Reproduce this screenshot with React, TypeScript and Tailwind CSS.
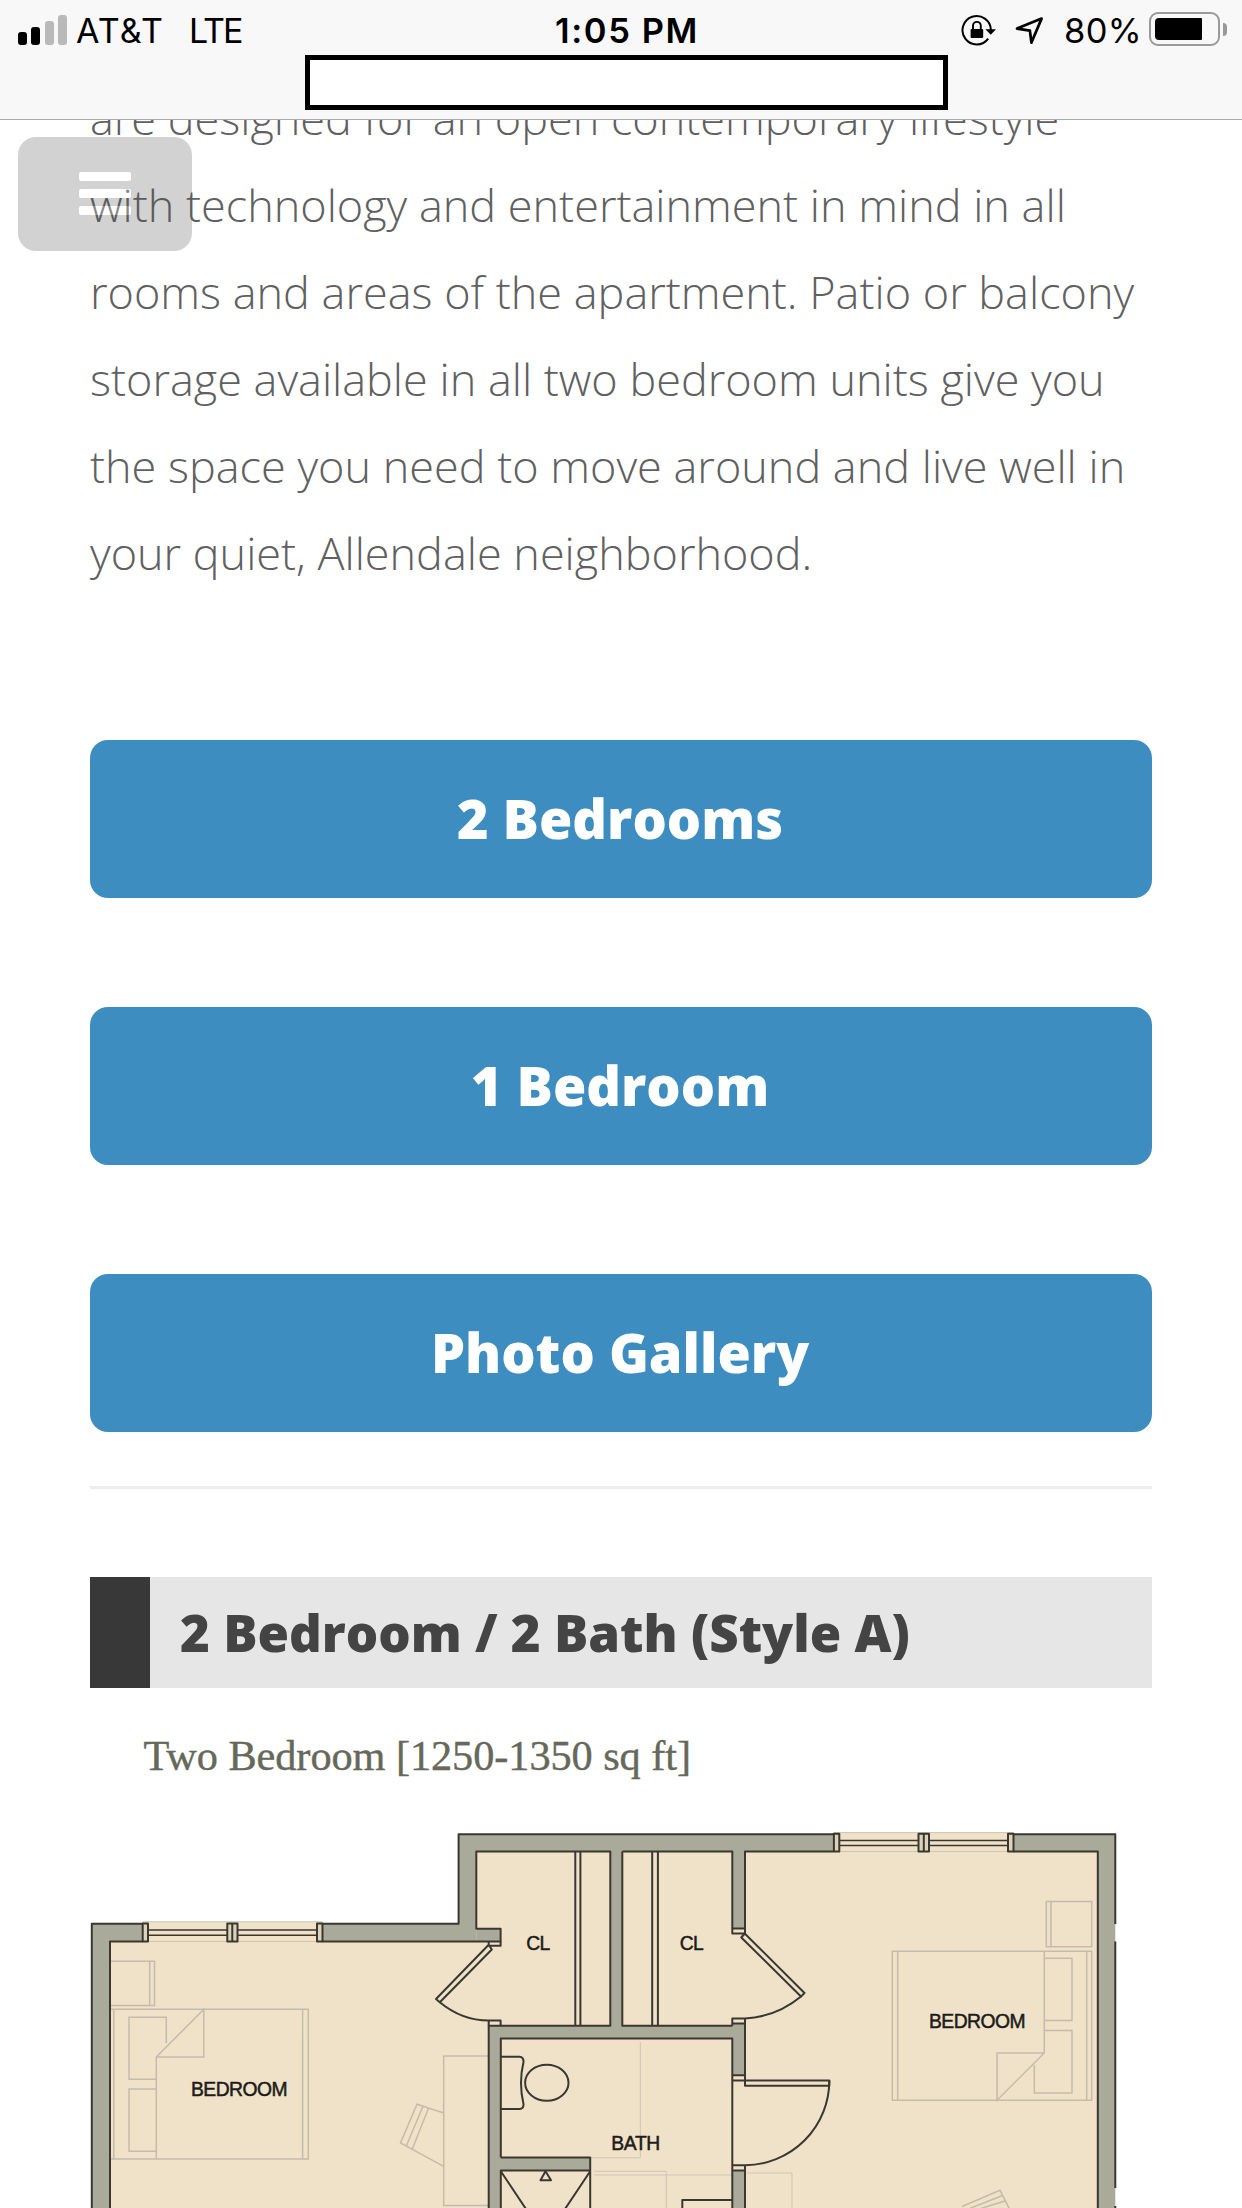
import type { ReactNode } from "react";

const OPEN_SANS = "font-['Open_Sans','Noto_Sans',sans-serif]";
const INTER = "font-['Inter','Liberation_Sans',sans-serif]";

function SignalBars() {
  return (
    <div className="flex h-[30px] w-[49px] items-end justify-between">
      <span className="h-[13px] w-[9px] rounded-[3px] bg-black" />
      <span className="h-[18px] w-[9px] rounded-[3px] bg-black" />
      <span className="h-[24px] w-[9px] rounded-[3px] bg-[#b9b9b9]" />
      <span className="h-[30px] w-[9px] rounded-[3px] bg-[#b9b9b9]" />
    </div>
  );
}

function RotationLockIcon() {
  return (
    <svg width="36" height="34" viewBox="961 13 36 34" fill="none">
      <path d="M988.2 38.6A14.2 14.2 0 1 1 990.9 30" stroke="#000" strokeWidth="2" />
      <path d="M985.4 29.2h10.6l-5.3 5.6z" fill="#000" />
      <rect x="970.6" y="29" width="12.6" height="9" rx="1" fill="#000" />
      <path d="M973 29.5v-3.7a3.9 3.9 0 0 1 7.8 0v3.7" stroke="#000" strokeWidth="1.9" />
    </svg>
  );
}

function LocationIcon() {
  return (
    <svg width="30" height="34" viewBox="1014 13 30 34" fill="none">
      <path
        d="M1017 28.6L1041.6 18.6L1031.4 42.6L1029.9 30.6Z"
        stroke="#000"
        strokeWidth="2.7"
        strokeLinejoin="round"
      />
    </svg>
  );
}

function Battery() {
  return (
    <div className="-mt-[1px] flex h-[34px] items-center gap-[3px]">
      <div className="h-[34px] w-[71px] rounded-[9px] border-[2px] border-[#999] p-[4px]">
        <div className="h-[22px] w-[47px] rounded-l-[4px] rounded-r-[1px] bg-black" />
      </div>
      <span className="h-[13px] w-[4px] rounded-r-full bg-[#999]" />
    </div>
  );
}

function Header() {
  return (
    <header className={`relative z-20 h-[120px] border-b border-[#acacac] bg-[#f8f8f8] text-black ${INTER}`}>
      <div className="grid h-[55px] grid-cols-[555px_145px_1fr]">
        <div className="flex pl-[18px] pt-[15px]">
          <SignalBars />
          <span className="ml-[9px] -mt-[3px] text-[34px] leading-[38px] tracking-[1.2px]">AT&amp;T</span>
          <span className="ml-[25px] -mt-[3px] text-[34px] leading-[38px] tracking-[-2px]">LTE</span>
        </div>
        <span className="pt-[12px] text-[34.5px] leading-[38px] font-[560] tracking-[1.6px] whitespace-nowrap">
          1:05 PM
        </span>
        <div className="flex pl-[261px] pt-[13px]">
          <RotationLockIcon />
          <div className="ml-[17px]">
            <LocationIcon />
          </div>
          <span className="ml-[20px] -mt-[1px] w-[85px] text-[34.5px] leading-[38px] tracking-[0.3px]">80%</span>
          <Battery />
        </div>
      </div>
      <div className="ml-[305px] h-[55px] w-[643px] border-[5px] border-black bg-white" />
    </header>
  );
}

function MenuButton() {
  return (
    <button
      aria-label="Menu"
      className="absolute top-[137px] left-[18px] z-10 flex h-[114px] w-[174px] flex-col items-center rounded-[18px] bg-[#4f4f4f] pt-[35px] opacity-25"
    >
      <span className="h-[9px] w-[52px] rounded-[2px] bg-white" />
      <span className="mt-[8px] h-[9px] w-[52px] rounded-[2px] bg-white" />
      <span className="mt-[8px] h-[9px] w-[52px] rounded-[2px] bg-white" />
    </button>
  );
}

function LinkButton({ children }: { children: ReactNode }) {
  return (
    <a className="flex h-[158px] items-center justify-center rounded-[18px] bg-[#3d8dc0] pr-[2px] pb-[2px] text-[54px] font-extrabold text-white">
      {children}
    </a>
  );
}

function FloorPlan() {
  const ink = "#3a3731";
  return (
    <svg className="block" width="1062" height="520" viewBox="90 1688 1062 520" fill="none">
      <text
        x="143.5"
        y="1769.5"
        textLength="547.5"
        fontFamily="'Liberation Serif', serif"
        fontSize="42.3"
        fill="#66685a"
        stroke="#66685a"
        strokeWidth=".4"
      >
        Two Bedroom [1250-1350 sq ft]
      </text>

      {/* walls */}
      <path d="M91.5 2220V1923.8H458.6V1834.2H1115.3V2220Z" fill="#a9aa99" />

      {/* floors */}
      <g fill="#f0e2c9">
        <path d="M110 1941.5H488.7V2220H110Z" />
        <path d="M476.3 1851.5H610.3V2025.7H476.3Z" />
        <path d="M622.3 1851.5H732.3V2025.7H622.3Z" />
        <path d="M500.8 2038.6H732.3V2220H500.8Z" />
        <path d="M745 1851.5H1097.8V2220H745Z" />
        <path d="M732 1928.5H745.5V2023.7H732Z" />
        <path d="M732 2075.5H745.5V2170.5H732Z" />
        <path d="M142.7 1921.5H322.5V1942H142.7Z" />
        <path d="M833.7 1832H1013.5V1852H833.7Z" />
      </g>
      <path d="M476.3 1928.7H500.6V1941.5H476.3Z" fill="#a9aa99" />
      <path d="M488.7 2026H500.8V2220H488.7Z" fill="#a9aa99" />
      <path d="M500.8 2157.6H590.2V2170.5H500.8Z" fill="#a9aa99" />

      {/* furniture */}
      <g stroke="#bdb5a6" strokeWidth="1.5" opacity=".85">
        <path d="M111 1961.3H154.5V2005.5H111M149.7 1961.3V2005.5" />
        <path d="M111 2009.3H308.3V2159H111M113.8 2009.3V2159M302.6 2009.3V2159" />
        <path d="M156.3 2159V2057L203.8 2009.3V2057H156.3" />
        <path d="M156 2079.3H129V2017.3H166.3V2043M156 2089H129V2151.3H156" />
        <path d="M488 2056H443.7V2205.5H488" />
        <path d="M443.7 2113L417 2104.3L400.5 2143L443.7 2166.3M423 2106.3L406.5 2145.5M428.5 2108.3L412.3 2149" />
        <path d="M892.3 1951.3H1091.7V2100.3H892.3ZM897.7 1951.3V2100.3M1086.7 1951.3V2100.3" />
        <path d="M1044.3 1951.3V2053L997 2100.3V2053H1044.3" />
        <path d="M1044.3 1958.3H1072V2020.5H1044.3M1044.3 2030.5H1072V2093H1034.3V2065" />
        <path d="M1046.3 1901.5H1091.7V1946.7H1046.3ZM1051 1901.5V1946.7" />
        <path d="M962 2206.5L1000 2190.3L1010 2210M966 2210L1002.5 2195.5M976 2210L1005 2201" />
      </g>
      <g stroke="#cdc6b3" strokeWidth="1">
        <path d="M640.3 2042V2157.8H590M594 2171.3H666.3V2208M594 2175H732M747 2173H792V2208" />
        <path d="M142.7 1921.8H322.5M142.7 1941.5H322.5M833.7 1832.6H1013.5M833.7 1851.5H1013.5" />
      </g>

      <g stroke={ink} strokeWidth="2" strokeLinejoin="round">
        {/* outer walls */}
        <path d="M91.8 2210V1923.8H142.7M322.5 1923.8H458.6V1834.2H833.7M1013.5 1834.2H1115.3V1924M1115.3 1941.5V2188M1115.3 2206V2210" />
        <path d="M110 2210V1941.5H142.7M322.5 1941.5H500.6V1928.7H476.3V1851.5H610.3V2025.7H488.7V2210" />
        <path d="M622.3 1851.5H732.3V1933.5H745V1851.5H833.7M1013.5 1851.5H1097.8V2210M622.3 1851.5V2025.7H732.3" />
        {/* bath walls */}
        <path d="M500.8 2157.6V2038.6H732.3V2210M500.8 2157.6H590.2V2210M590.2 2170.5H500.8V2210M500.8 2171.3L528 2212M590.2 2171.3L563 2212" />
        <path d="M545.5 2171.3L540.5 2180.3H551Z" />
        <path d="M682.3 2210V2200H732.3" />
        {/* windows */}
        <path d="M148 1930H227M148 1935.3H227M238 1930H317M238 1935.3H317" strokeWidth="1.6" />
        <path d="M839.5 1840.5H918.5M839.5 1845.5H918.5M929 1840.5H1007.7M929 1845.5H1007.7" strokeWidth="1.6" />
        <path
          d="M142.7 1923.5H148V1941.5H142.7ZM227.3 1923.5H232.3V1941.5H227.3ZM232.3 1923.5H237.5V1941.5H232.3ZM317 1923.5H322.5V1941.5H317Z"
          fill="#ddd3b9"
        />
        <path
          d="M833.9 1833.8H839.3V1851.5H833.9ZM918.5 1833.8H923.8V1851.5H918.5ZM923.8 1833.8H929V1851.5H923.8ZM1008 1833.8H1013.5V1851.5H1008Z"
          fill="#ddd3b9"
        />
        {/* closet rods */}
        <path d="M575.3 1851.5V2025.7M580.4 1851.5V2025.7M652.2 1851.5V2025.7M657.9 1851.5V2025.7" />
        {/* doors */}
        <path d="M500.6 1941.5V1945.7H488.7V1941.5M488.7 1944.7L436 1999L439.8 2002.2L491.8 1949.5Z" />
        <path d="M439.8 2002.2Q462 2020.5 488.7 2020.5H500.6V2025.7M488.7 2020.5V2026" />
        <path d="M732.3 1928.5H745M744.7 1933.5L804.5 1993L801 1996.5L741.3 1937.5Z" />
        <path d="M801 1996.5Q776 2017 745 2018.4H732.3V2025.7M732.3 2023.5H745M745 2018.4V2085.8H829.3V2080.5H732.3M732.3 2075.3H745" />
        <path d="M829.3 2080.5A84.5 84.5 0 0 1 745 2165.2H732.3M732.3 2170.5H745M745 2165.2V2210" />
        {/* toilet */}
        <path d="M501 2056.8H519.5Q523.8 2057.3 523.5 2062Q518.5 2083 523.5 2104Q523.8 2108.8 519.5 2109H501" />
        <ellipse cx="546.8" cy="2082.8" rx="21.7" ry="18" />
      </g>

      <g
        fill="#1d1c1a"
        stroke="#1d1c1a"
        strokeWidth=".5"
        fontFamily="'Liberation Sans', Arial, sans-serif"
        fontSize="19.3"
      >
        <text x="191" y="2095.5" textLength="96.5">BEDROOM</text>
        <text x="929" y="2028.3" textLength="96.5">BEDROOM</text>
        <text x="526.3" y="1949.5" textLength="24">CL</text>
        <text x="679.8" y="1949.5" textLength="24">CL</text>
        <text x="611.3" y="2150" textLength="49">BATH</text>
      </g>
    </svg>
  );
}

export default function App() {
  return (
    <div className={`relative h-[2208px] w-[1242px] overflow-hidden bg-white ${OPEN_SANS}`}>
      <Header />
      <MenuButton />
      <main className="mx-[90px] -mt-[46px]">
        <p className="h-[666px] text-[45px] leading-[87px] font-light whitespace-nowrap text-[#606060]">
          are designed for an open contemporary lifestyle
          <br />
          with technology and entertainment in mind in all
          <br />
          rooms and areas of the apartment. Patio or balcony
          <br />
          storage available in all two bedroom units give you
          <br />
          the space you need to move around and live well in
          <br />
          your quiet, Allendale neighborhood.
        </p>
        <nav className="flex flex-col gap-[109px]">
          <LinkButton>2 Bedrooms</LinkButton>
          <LinkButton>1 Bedroom</LinkButton>
          <LinkButton>Photo Gallery</LinkButton>
        </nav>
        <hr className="mt-[54px] border-t-[3px] border-[#ededed]" />
        <h2 className="mt-[88px] flex h-[111px] items-center border-l-[60px] border-[#383838] bg-[#e6e6e6] pl-[30px] text-[51px] font-extrabold text-[#444]">
          2 Bedroom / 2 Bath (Style A)
        </h2>
        <FloorPlan />
      </main>
    </div>
  );
}
